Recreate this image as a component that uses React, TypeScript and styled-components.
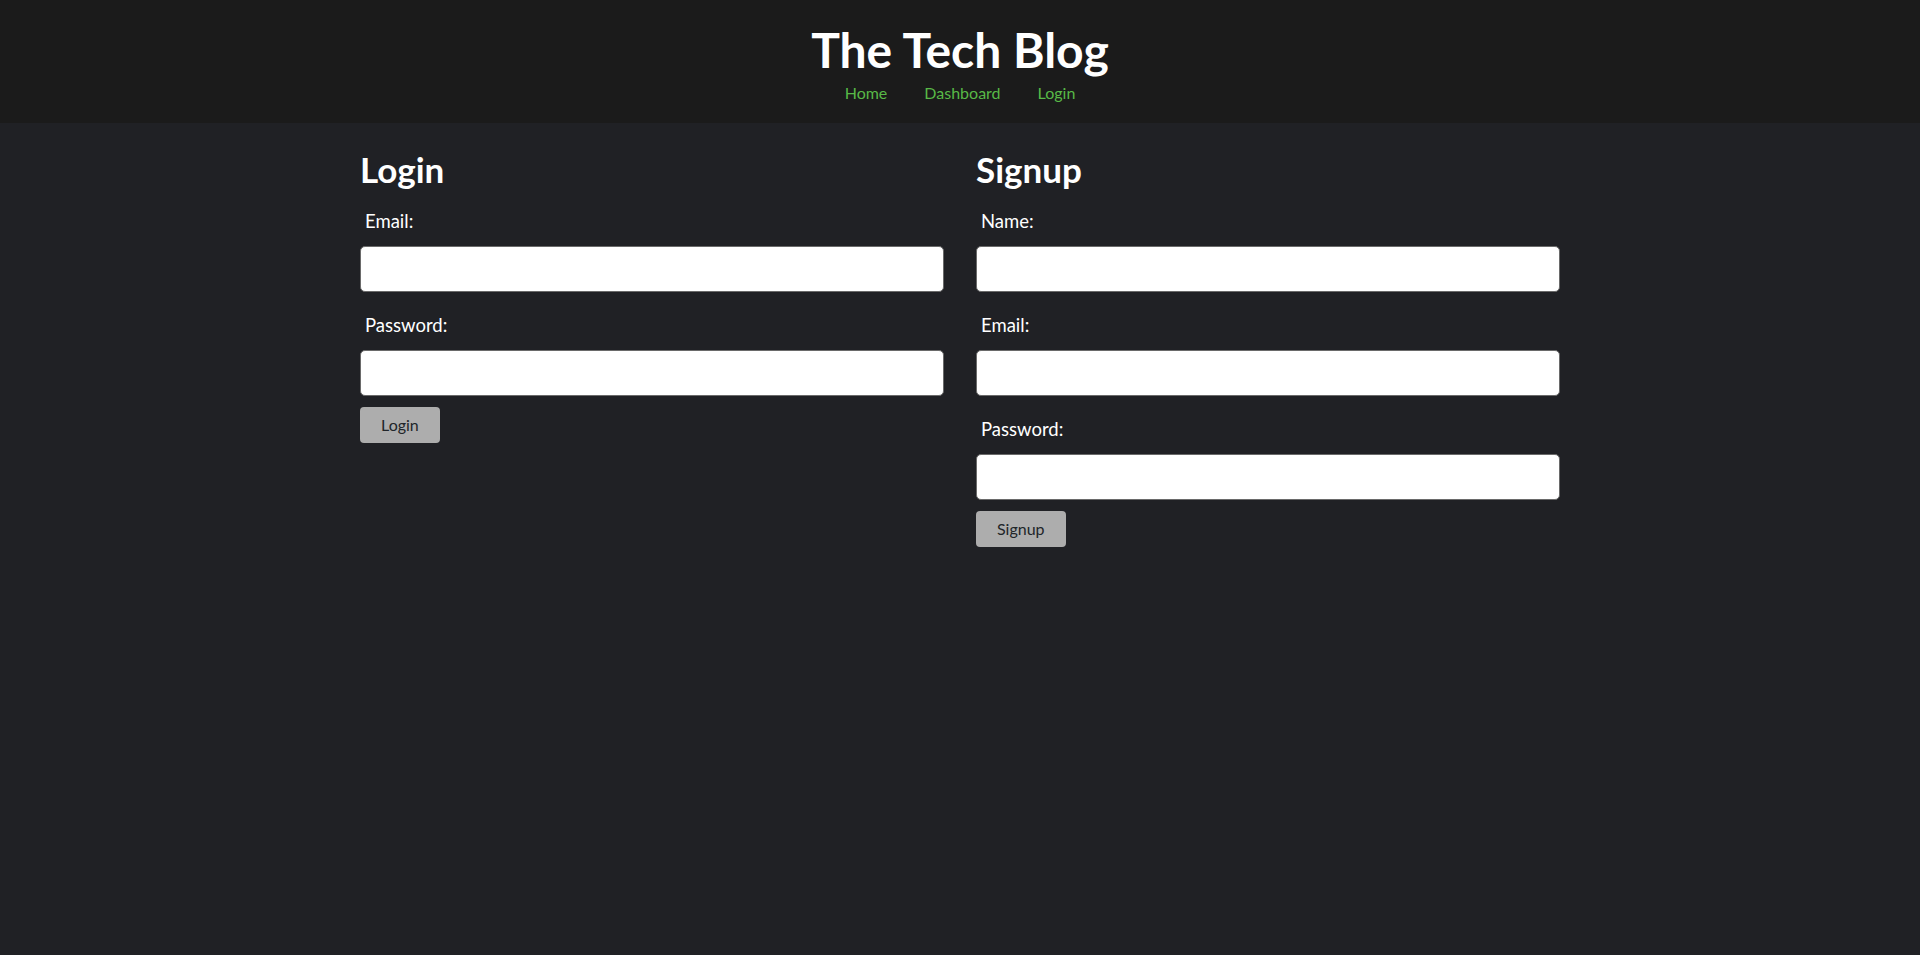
import React from "react";
import styled, { createGlobalStyle } from "styled-components";

const GlobalStyle = createGlobalStyle`
  *, *::before, *::after { box-sizing: border-box; }
  html, body {
    margin: 0;
    padding: 0;
    background: #202125;
    color: #ffffff;
    font-family: Lato, "Liberation Sans", Arial, sans-serif;
  }
`;

const Header = styled.header`
  height: 123px;
  background: #1b1b1b;
  padding-top: 21px;
  display: flex;
  flex-direction: column;
  align-items: center;
`;

const Title = styled.h1`
  margin: 0;
  font-size: 48px;
  line-height: 1.2;
  font-weight: 700;
  color: #ffffff;
`;

const Nav = styled.nav`
  margin-top: 2px;
  display: flex;
  gap: 37px;
`;

const NavLink = styled.a`
  font-size: 16px;
  line-height: 24px;
  color: #58b947;
  text-decoration: none;
  cursor: pointer;
`;

const Main = styled.main`
  width: 1200px;
  margin: 0 auto;
  padding-top: 25px;
  display: grid;
  grid-template-columns: 1fr 1fr;
  column-gap: 32px;
  align-items: start;
`;

const Section = styled.section`
  display: flex;
  flex-direction: column;
`;

const Heading = styled.h2`
  margin: 0 0 19px;
  font-size: 35px;
  line-height: 1.2;
  font-weight: 700;
  color: #ffffff;
`;

const Form = styled.form`
  display: flex;
  flex-direction: column;
  align-items: flex-start;
`;

const Field = styled.div`
  width: 100%;
  display: flex;
  flex-direction: column;
  gap: 12px;
  margin-bottom: 21px;

  &:last-of-type {
    margin-bottom: 11px;
  }
`;

const Label = styled.label`
  padding-left: 5px;
  font-size: 18.5px;
  line-height: 25px;
  color: #ffffff;
`;

const Input = styled.input`
  width: 100%;
  height: 46px;
  margin: 0;
  padding: 6px 12px;
  border: 1px solid #6a6a6a;
  border-radius: 5px;
  background: #ffffff;
  font-size: 16px;
  font-family: inherit;
  outline: none;
`;

const Button = styled.button`
  height: 36px;
  padding: 0 21px;
  border: 0;
  border-radius: 4px;
  background: #adadad;
  color: #212529;
  font-family: inherit;
  font-size: 16px;
  line-height: 24px;
  cursor: pointer;
`;

type FieldDef = { id: string; label: string; type: string };

const AuthForm: React.FC<{ title: string; prefix: string; fields: FieldDef[]; action: string }> = ({
  title,
  prefix,
  fields,
  action,
}) => (
  <Section>
    <Heading>{title}</Heading>
    <Form onSubmit={(e) => e.preventDefault()}>
      {fields.map((f) => (
        <Field key={f.id}>
          <Label htmlFor={`${prefix}-${f.id}`}>{f.label}</Label>
          <Input id={`${prefix}-${f.id}`} type={f.type} />
        </Field>
      ))}
      <Button type="submit">{action}</Button>
    </Form>
  </Section>
);

export default function App() {
  return (
    <>
      <GlobalStyle />
      <Header>
        <Title>The Tech Blog</Title>
        <Nav>
          <NavLink href="#">Home</NavLink>
          <NavLink href="#">Dashboard</NavLink>
          <NavLink href="#">Login</NavLink>
        </Nav>
      </Header>
      <Main>
        <AuthForm
          title="Login"
          prefix="login"
          action="Login"
          fields={[
            { id: "email", label: "Email:", type: "email" },
            { id: "password", label: "Password:", type: "password" },
          ]}
        />
        <AuthForm
          title="Signup"
          prefix="signup"
          action="Signup"
          fields={[
            { id: "name", label: "Name:", type: "text" },
            { id: "email", label: "Email:", type: "email" },
            { id: "password", label: "Password:", type: "password" },
          ]}
        />
      </Main>
    </>
  );
}
